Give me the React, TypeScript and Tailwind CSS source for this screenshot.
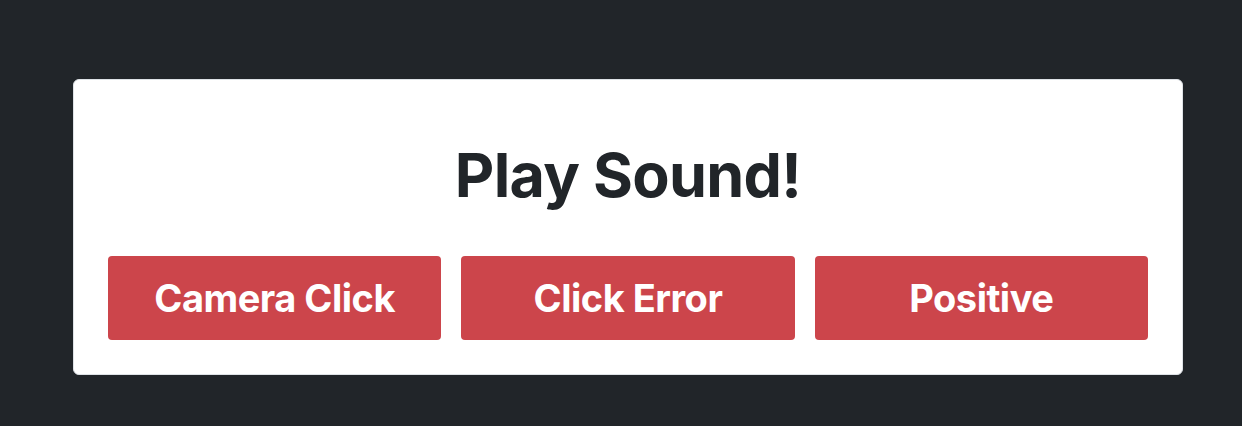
export default function App() {
  const sounds = ['Camera Click', 'Click Error', 'Positive'];

  return (
    <div className="min-h-screen bg-[#212529] pt-[79px] px-[73px]" style={{ fontFamily: 'Inter, "Noto Sans", sans-serif' }}>
      <div className="bg-white border border-[#dee2e6] rounded-md px-[34px] pt-[57px] pb-[34px] w-[1110px] h-[296px]">
        <h1 className="text-center text-[61px] leading-[76px] font-bold text-[#212529] tracking-[-0.7px]">Play Sound!</h1>
        <div className="grid grid-cols-3 gap-5 mt-[43px]">
          {sounds.map((s) => (
            <button
              key={s}
              className="h-[84px] rounded bg-[#cc454b] text-white font-bold text-[38px] tracking-[-0.5px]"
            >
              {s}
            </button>
          ))}
        </div>
      </div>
    </div>
  );
}
